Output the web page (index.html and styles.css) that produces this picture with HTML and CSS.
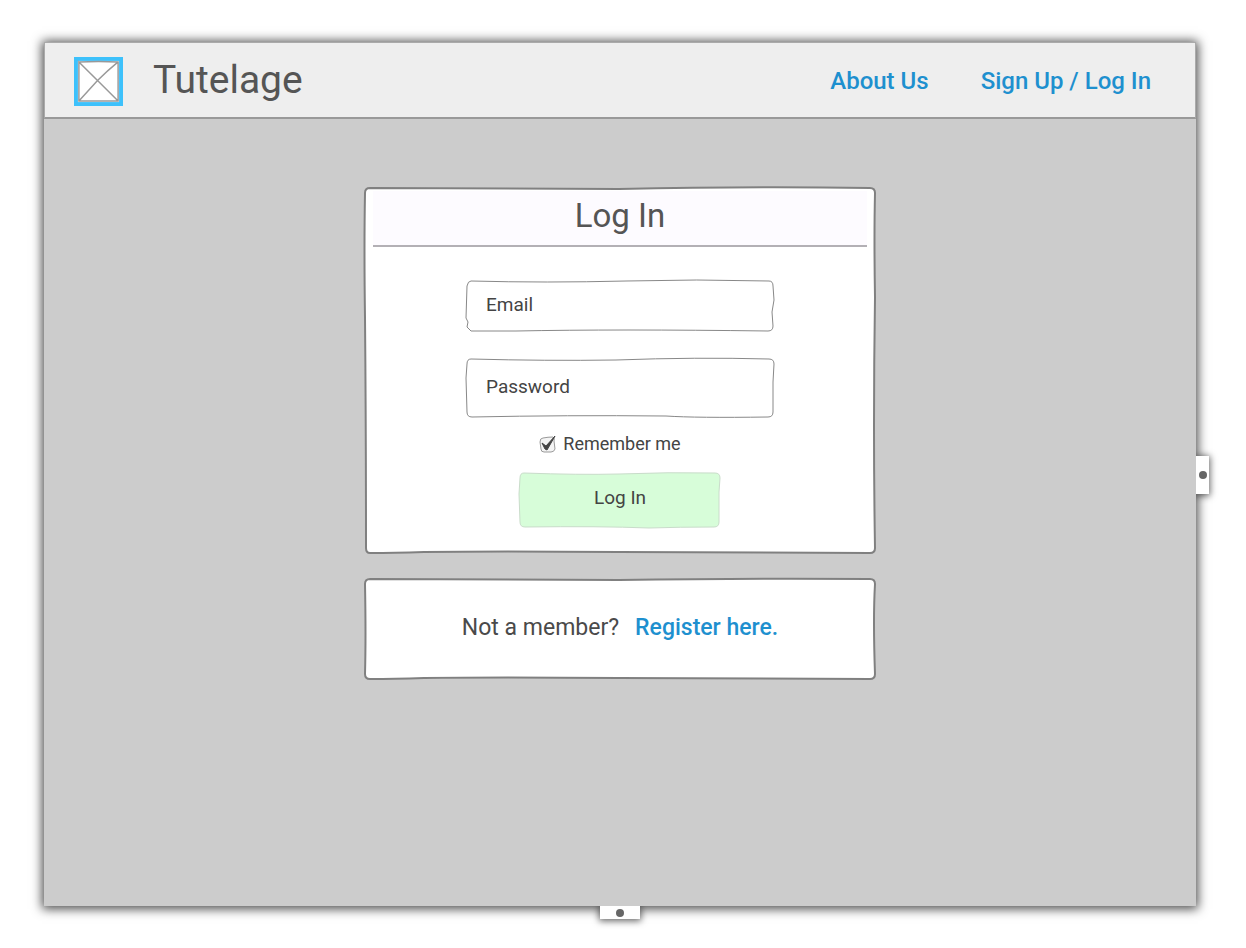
FILE: index.html
```html
<!DOCTYPE html>
<html lang="en">
<head>
<meta charset="utf-8">
<title>Tutelage – Log In</title>
<meta name="viewport" content="width=device-width, initial-scale=1">
<link rel="stylesheet" href="styles.css">
</head>
<body>
<div class="frame">
  <header class="topbar">
    <a class="brand" href="#">
      <svg class="logo" viewBox="0 0 50 50" aria-hidden="true">
        <rect x="2" y="2" width="46" height="46" fill="#fff" stroke="#3dc1fb" stroke-width="4"/>
        <path d="M5 5Q25 4 45 5Q45 25 45 45Q25 45 5 45Q5 25 5 5L24 24L45 45M45 5Q34 14 24 24Q15 34 5 45" fill="none" stroke="#999" stroke-width="1.5"/>
      </svg>
      <span class="brand-name">Tutelage</span>
    </a>
    <nav class="nav">
      <a class="link nav-link" href="#">About Us</a>
      <a class="link nav-link" href="#">Sign Up / Log In</a>
    </nav>
  </header>

  <main class="content">
    <section class="card">
      <svg class="sketch" viewBox="0 0 512 366" preserveAspectRatio="none" aria-hidden="true">
        <path class="outline" d="M6 1Q130 2 255 2Q390 -1 506 1Q511 1 511 6Q510 50 511 110Q509 240 511 360Q511 365 506 365Q380 364 255 364Q130 363 60 364Q30 365 6 365Q2 365 2 360Q2 240 1 130Q0 60 1 6Q1 1 6 1Z"/>
      </svg>
      <h1 class="title">Log In</h1>
      <form class="form">
        <div class="field">
          <svg class="sketch" viewBox="0 0 308 52" preserveAspectRatio="none" aria-hidden="true">
            <path class="outline thin" d="M5 1Q80 3 160 1Q230 -1 303 1Q307 1 307 6L308 20L306 32L307 46Q307 51 302 51Q150 49 50 51L5 51L1 47L2 42L0 38L1 6Q2 1 5 1Z"/>
          </svg>
          <input class="input" type="email" placeholder="Email" aria-label="Email">
        </div>
        <div class="field field-tall">
          <svg class="sketch" viewBox="0 0 308 60" preserveAspectRatio="none" aria-hidden="true">
            <path class="outline thin" d="M5 1Q80 3 150 2Q230 -1 303 1Q308 1 308 6L307 24L307 54Q307 59 302 59Q230 60 200 58Q100 57 6 59Q1 59 1 54L0 20L1 6Q1 1 5 1Z"/>
          </svg>
          <input class="input" type="password" placeholder="Password" aria-label="Password">
        </div>
        <label class="remember">
          <span class="tick">
            <input class="checkbox" type="checkbox" checked>
            <svg class="tick-mark" viewBox="0 0 18 18" aria-hidden="true">
              <path d="M4 3Q9 2 14 2Q16 3 15 6L16 14Q15 17 12 17L5 17Q2 17 2 14L1 7Q1 3 4 3Z" fill="#f4f4f4" stroke="#999"/>
              <path d="M3 8L7 11L16 1L8 15L6 14Z" fill="#444" stroke="#444" stroke-linejoin="round"/>
            </svg>
          </span>
          Remember me
        </label>
        <button class="submit" type="button">
          <svg class="sketch" viewBox="0 0 202 56" preserveAspectRatio="none" aria-hidden="true">
            <path class="outline soft" d="M5 1Q60 3 100 2Q150 0 196 1Q201 1 201 6L200 20L200 50Q200 55 195 55Q160 55 130 56Q80 54 6 55Q1 55 1 50L0 22L1 6Q1 1 5 1Z"/>
          </svg>
          <span class="submit-text">Log In</span>
        </button>
      </form>
    </section>

    <section class="card register">
      <svg class="sketch" viewBox="0 0 512 102" preserveAspectRatio="none" aria-hidden="true">
        <path class="outline" d="M6 1Q130 2 255 2Q390 0 506 1Q511 1 511 6Q509 40 511 96Q511 101 506 101Q380 101 255 100Q130 99 60 100Q30 101 6 101Q1 101 1 96Q2 60 1 6Q1 1 6 1Z"/>
      </svg>
      <p class="register-text">Not a member?</p>
      <a class="link" href="#">Register here.</a>
    </section>
  </main>

  <span class="handle handle-right"></span>
  <span class="handle handle-bottom"></span>
</div>
</body>
</html>
```
FILE: styles.css
```css
* {
  box-sizing: border-box;
}

body {
  margin: 0;
  min-height: 100vh;
  padding: 42px 50px 42px 44px;
  display: flex;
  background: #fff;
  color: #4a4a4a;
  font-family: Roboto, "Liberation Sans", sans-serif;
}

.frame {
  position: relative;
  flex: 1;
  display: flex;
  flex-direction: column;
  background: #ccc;
  box-shadow: 0 1px 10px 2px rgba(0, 0, 0, 0.7);
}

.topbar {
  display: flex;
  align-items: center;
  justify-content: space-between;
  flex-wrap: wrap;
  min-height: 77px;
  padding: 2px 44px 0 29px;
  background: #eee;
  border: 1px solid #aaa;
  border-bottom: 2px solid #999;
}

.brand {
  display: flex;
  align-items: center;
  gap: 30px;
  color: #555;
  text-decoration: none;
}

.logo {
  width: 49px;
  height: 49px;
}

.brand-name {
  font-size: 39px;
  line-height: 48px;
  padding-bottom: 3px;
}

.nav {
  display: flex;
  flex-wrap: wrap;
  gap: 52px;
}

.link {
  color: #1e90cf;
  font-size: 23px;
  font-weight: 500;
  line-height: 28px;
  text-decoration: none;
}

.nav-link {
  font-size: 24px;
}

.content {
  display: flex;
  flex-direction: column;
  align-items: center;
  gap: 24px;
  padding: 68px 20px 40px;
}

.card {
  position: relative;
  z-index: 0;
  width: 100%;
  max-width: 512px;
}

.sketch {
  position: absolute;
  inset: 0;
  z-index: -1;
  width: 100%;
  height: 100%;
  overflow: visible;
}

.outline {
  fill: #fff;
  stroke: #808080;
  stroke-width: 2;
  vector-effect: non-scaling-stroke;
}

.thin {
  stroke: #888;
  stroke-width: 1;
}

.soft {
  fill: #d7fdd9;
  stroke: #c9dcca;
  stroke-width: 1;
}

.title {
  margin: 0 9px;
  padding: 10px 0;
  border-bottom: 2px solid #b3b0b5;
  background: linear-gradient(#fdfbff, #fdfbff) no-repeat 0 4px;
  color: #555;
  font-size: 33px;
  font-weight: 400;
  line-height: 38px;
  text-align: center;
}

.form {
  display: flex;
  flex-direction: column;
  align-items: center;
  padding: 33px 20px 26px;
}

.field {
  position: relative;
  z-index: 0;
  width: 100%;
  max-width: 308px;
  height: 52px;
  margin-bottom: 26px;
}

.field-tall {
  height: 60px;
  margin-bottom: 12px;
}

.input {
  width: 100%;
  height: 100%;
  padding: 0 20px 4px;
  border: 0;
  background: transparent;
  color: #444;
  font: 19px/24px Roboto, "Liberation Sans", sans-serif;
}

.input::placeholder {
  color: #444;
  opacity: 1;
}

.remember {
  display: flex;
  align-items: center;
  gap: 6px;
  margin-bottom: 14px;
  padding-right: 20px;
  color: #444;
  font-size: 18px;
  line-height: 28px;
}

.tick {
  position: relative;
  width: 18px;
  height: 18px;
}

.checkbox {
  width: 18px;
  height: 18px;
  margin: 0;
  appearance: none;
}

.tick-mark {
  position: absolute;
  inset: 0;
  width: 18px;
  height: 18px;
  pointer-events: none;
}

.checkbox:not(:checked) + .tick-mark path:last-child {
  display: none;
}

.submit {
  position: relative;
  z-index: 0;
  width: 202px;
  max-width: 100%;
  height: 56px;
  padding: 0 0 4px;
  border: 0;
  background: transparent;
  color: #444;
  font: 19px/24px Roboto, "Liberation Sans", sans-serif;
  cursor: pointer;
}

.register {
  display: flex;
  flex-wrap: wrap;
  align-items: center;
  justify-content: center;
  gap: 16px;
  min-height: 102px;
  padding-bottom: 2px;
}

.register-text {
  margin: 0;
  font-size: 23px;
  line-height: 28px;
}

.handle {
  position: absolute;
  display: flex;
  align-items: center;
  justify-content: center;
  background: #fff;
  box-shadow: 0 1px 7px 1px rgba(0, 0, 0, 0.6);
}

.handle::before {
  content: "";
  width: 8px;
  height: 8px;
  border-radius: 50%;
  background: #666;
}

.handle-right {
  left: 100%;
  top: 50%;
  width: 13px;
  height: 38px;
  margin-top: -18px;
  clip-path: inset(-10px -10px -10px 0);
}

.handle-bottom {
  left: 50%;
  top: 100%;
  width: 40px;
  height: 13px;
  margin-left: -20px;
  clip-path: inset(0 -10px -10px -10px);
}
```
